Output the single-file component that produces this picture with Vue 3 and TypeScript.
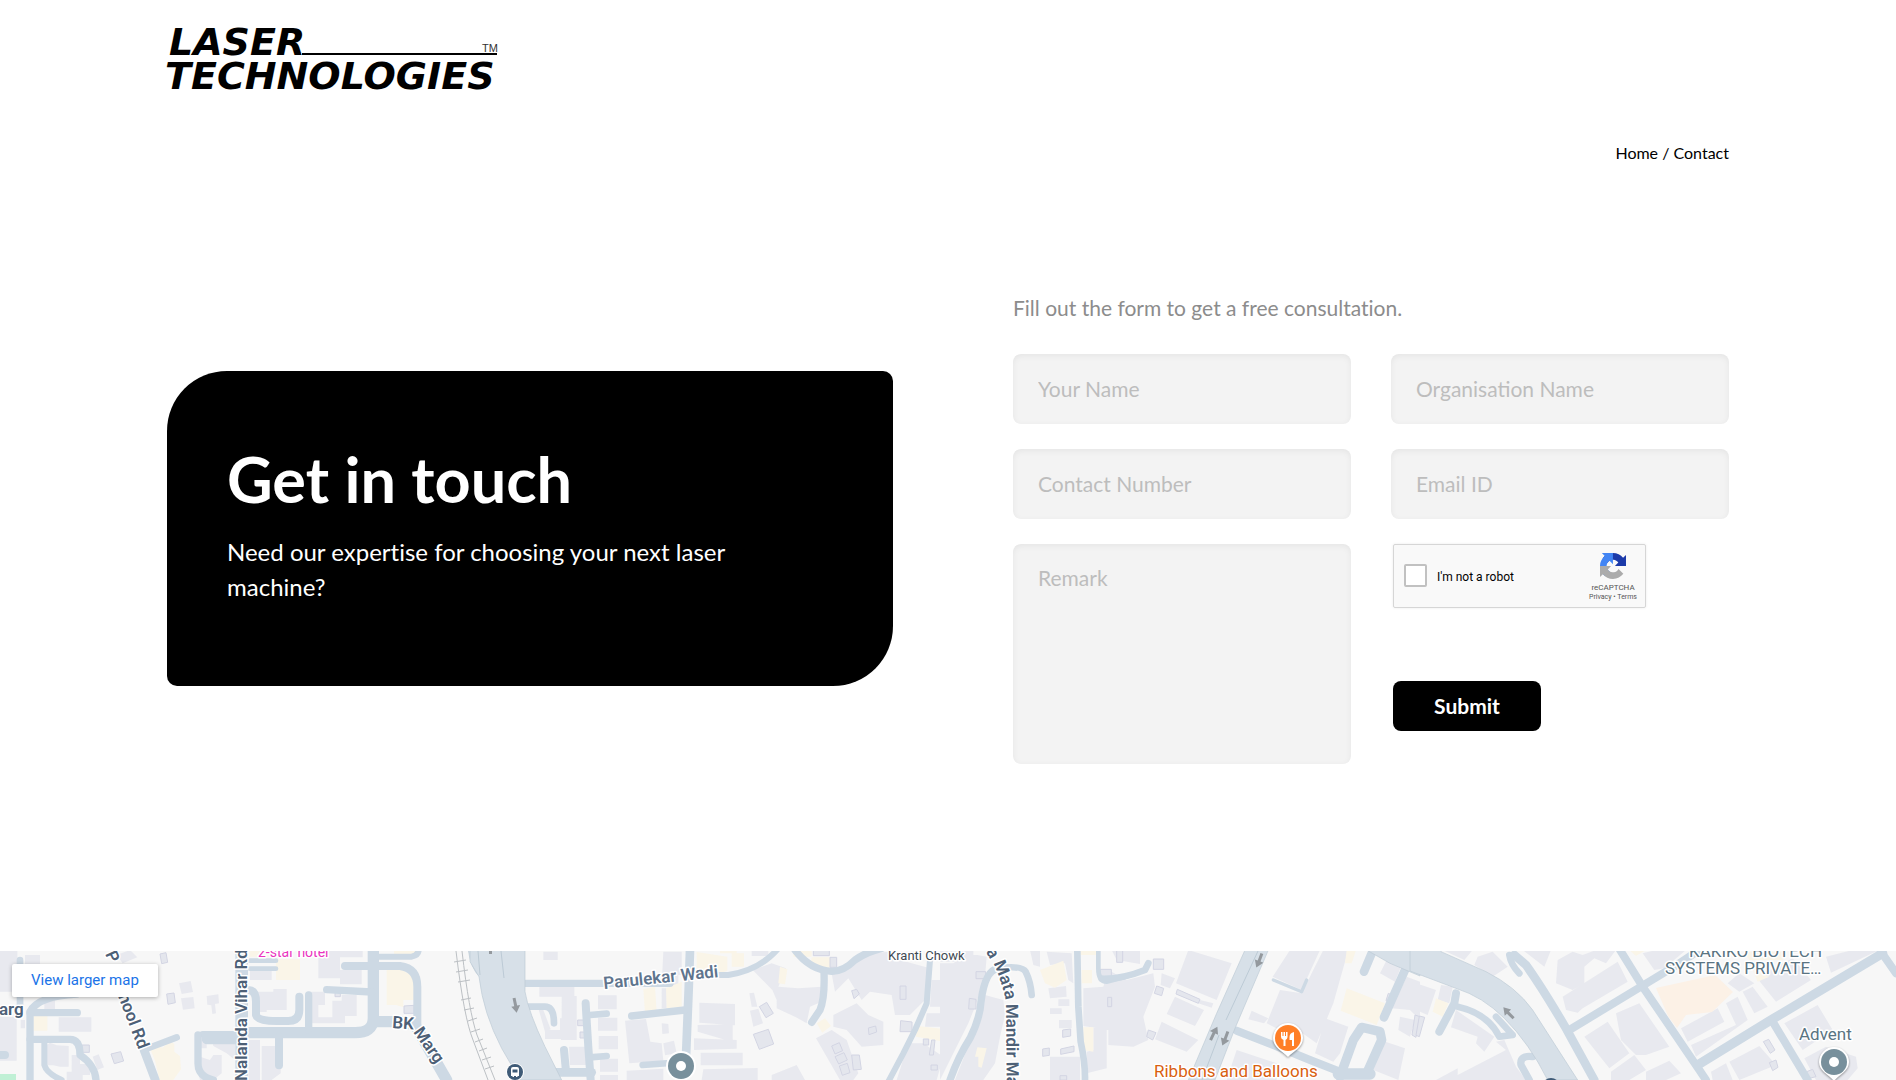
<script setup lang="ts">
import { reactive } from 'vue'

interface Road {
  d: string
  w: number
}

interface Tile {
  x: number
  buildings: string
  outlined: string
  cream: string
  highways: string
  roads: Road[]
}

const form = reactive({
  name: '',
  organisation: '',
  phone: '',
  email: '',
  remark: '',
  human: false,
})

const fields = [
  { key: 'name', label: 'Your Name', type: 'text' },
  { key: 'organisation', label: 'Organisation Name', type: 'text' },
  { key: 'phone', label: 'Contact Number', type: 'tel' },
  { key: 'email', label: 'Email ID', type: 'email' },
] as const

// Map artwork, stored per tile in thirds of a pixel.
const tiles: Tile[] = [
  {
    x: 0,
    buildings:
      'M0 30H52V155H0Z M75 45H120V72H75Z M350 45L390 30L412 52L368 70Z M133 180H165V210H133Z M176 232H274V275H176Z M0 230H50V362H0Z M62 240H75V265H62Z M135 318L150 308L170 316L206 318V380H180L160 376L132 376Z M215 345H240V372H270V405H248V420H200V395H215Z M278 350L296 343L312 382L292 390Z M537 130L572 123L579 156L545 162Z M543 175L580 171L584 205L549 209Z M620 168L655 163L657 190L645 192L648 220L637 222L634 196L622 194Z M586 283H620V325H586Z M635 290H705V360L680 340L640 318Z M600 350L630 360L640 345H665V400L640 420H600L592 385Z M745 300H780V420H745Z M785 318H825V355H842V400L815 420H785Z M750 85H815V120H750Z M760 155H820V147H860V210H800V216L760 216Z M955 50H1020V90H1085V133H1020V115H955Z M920 155H975V195H955V232H997V182H1025V165H1070V228H1035V250H920Z M965 30H1088V52H965Z',
    outlined:
      'M480 42L498 38L503 67L485 71Z M500 162L522 159L526 188L504 193Z M333 342L362 335L371 363L343 371Z M1005 148H1021V170H1005Z M1212 198L1242 196V220L1212 220Z M246 315H268V337H246Z',
    cream:
      'M100 228H142V272H100Z M450 325L480 315L486 325L510 304L523 312V335L540 348L543 388L520 420H478L466 365Z M828 58H900V120H828Z M748 30H820V50H748Z M1160 88L1195 76H1215V95L1243 108V180H1210V202L1188 195H1160Z M1182 30H1250V46H1225V58H1190V46H1182Z',
    highways: 'M1405 30H1440V112Q1412 85 1405 30Z',
    roads: [
      { d: 'M90 420V215Q115 168 230 162', w: 22 },
      { d: 'M90 218H232', w: 22 },
      { d: 'M60 60V200', w: 20 },
      { d: 'M90 298H210Q240 298 240 345Q285 375 288 420', w: 22 },
      { d: 'M133 300V375Q140 400 185 420', w: 18 },
      { d: 'M0 345H15', w: 24 },
      { d: 'M432 330L466 420', w: 26 },
      { d: 'M430 330L530 292', w: 20 },
      { d: 'M725 30V420', w: 38 },
      { d: 'M608 283H710', w: 20 },
      { d: 'M622 296H715', w: 34 },
      { d: 'M594 285V370Q594 410 640 420', w: 22 },
      { d: 'M740 278H1060Q1120 280 1120 235V30', w: 34 },
      { d: 'M837 290V376', w: 24 },
      { d: 'M926 165V270', w: 22 },
      { d: 'M745 150Q768 150 768 185V225Q772 243 830 243H865Q898 243 898 210V170', w: 24 },
      { d: 'M980 149L1115 156', w: 22 },
      { d: 'M1035 78H1200Q1252 85 1252 140V260', w: 24 },
      { d: 'M1130 245H1200L1245 255L1340 420', w: 34 },
      { d: 'M1135 50H1235Q1258 45 1256 25', w: 18 },
      { d: 'M750 62H828M750 86H828', w: 14 },
    ],
  },
  {
    x: 470,
    buildings:
      'M220 35H263V60H220Z M208 138H313V168H320V300H273V297H225V270H270V235H275V170H208Z M205 205L220 210L242 268L225 275Z M580 35H635V105H625V135H575Z M384 166H440V208H384Z M384 233H442V272H384Z M386 288H444V328H386Z M390 356H444V395H390Z M465 242L528 237L541 305L575 310L580 362L478 370Z M297 320H350V375H300Z M575 250L595 252L597 280L577 282Z M580 310L612 302L620 340L585 346Z M688 188L795 192V256L688 248Z M683 255L788 253V306L683 275Z M672 295L800 300V326L672 330Z M692 338H818V376H692Z M390 405H444V420H390Z M470 392L580 386V420H470Z M700 388L863 384V420H695Z M838 160L852 158L862 200L845 200Z M840 212L865 206L879 250L850 260Z M848 90L905 70L948 85L925 140L985 145L1055 140V185L1020 200L1010 250L978 232L920 205V180L907 150Z M845 30H895V48H845Z M905 405L980 375L1005 420H905Z M1083 90L1170 60L1200 40L1260 35L1290 60L1380 85L1365 180L1320 225L1275 225L1265 165L1200 155L1175 180L1135 115L1095 155Z M1090 225L1160 190L1195 225L1240 245V315L1175 320L1130 270L1090 260Z M1038 295L1085 270L1130 300L1165 400L1150 420H1110Z M1385 120H1440V200H1380Z M1370 220H1440V260H1365Z M1315 310H1360L1420 350L1400 420H1280Z M575 145H590V205H575Z',
    outlined:
      'M868 200L890 187L910 220L888 233Z M850 283L895 268L911 312L868 328Z M1145 152L1160 148L1168 162L1152 176Z M1085 318L1108 308L1118 332L1095 342Z M1095 350L1122 338L1132 360L1106 372Z M1108 378L1132 370L1140 398L1117 406Z M1145 345L1168 345L1174 388L1150 390Z M1195 264L1217 258L1220 276L1197 284Z M1290 138H1308V178H1290Z M1292 242L1326 246V275H1290Z M1385 300H1395L1390 345H1378Z M1080 52H1100V82H1080Z M1030 30H1078V47H1030Z M323 240H342V257H323Z M330 276H345V294H330Z M1360 297H1376V315H1360Z M1383 375H1402V390H1383Z',
    cream:
      'M520 148L555 140L560 215L525 220Z M588 145L635 125V200L590 205Z M680 36L772 50V92L735 105V92H680Z M785 40H822V80H785Z M930 80L952 88L945 133L925 130Z M1025 52H1080V85H1020Z M1040 250L1065 235L1083 258L1057 278Z M1342 258L1415 266L1413 304L1338 290Z M750 30H800V40H750Z M970 30H1025V50H970Z',
    highways: 'M0 30H165V155Q175 215 225 320L275 420H150L95 325Q40 220 27 110L0 65Z',
    roads: [
      { d: 'M160 130H600', w: 22 },
      { d: 'M660 30L656 150L648 350', w: 26 },
      { d: 'M730 105H775Q870 90 925 25', w: 18 },
      { d: 'M975 30Q1020 90 1085 94Q1120 95 1155 60Q1190 35 1235 25', w: 22 },
      { d: 'M1062 95Q1065 175 1050 210L1025 247', w: 22 },
      { d: 'M1380 60L1370 190L1335 270L1300 340L1255 425', w: 18 },
      { d: 'M485 228L645 210', w: 22 },
      { d: 'M518 375L600 369', w: 20 },
      { d: 'M175 200H225Q252 200 252 250', w: 20 },
      { d: 'M347 190Q353 300 362 420', w: 24 },
      { d: 'M360 225L410 221M360 352L410 348', w: 20 },
      { d: 'M255 397H365', w: 26 },
      { d: 'M282 330L288 395', w: 24 },
    ],
  },
  {
    x: 940,
    buildings:
      'M0 70H40L85 40L140 50L135 110L105 200L85 250L55 310L0 420Z M270 30H300V80L280 75Z M320 35L395 40L400 130L385 120L375 70L330 75Z M135 165L190 180L195 225L180 290L165 370L130 420H45L80 330L120 250Z M325 145L378 138L380 170L330 175Z M355 178H388V198H355Z M330 205H365V222H330Z M357 240H395V265H357Z M430 145L490 140L505 90L560 120L640 100L645 140L610 230L625 300L580 320L505 315V270L430 258Z M460 260L500 262V385L440 400V335L460 330Z M330 350H420V420H330Z M745 30L875 70L830 180L708 130Z M705 170L792 210L765 258L680 222Z M665 245L775 300L740 335L645 298Z M515 30H600V72L530 60Z M665 100L705 115L690 145L662 135Z M780 180L820 190L815 203L775 190Z M1050 30L1140 30L1085 150L998 110Z M1150 30H1225L1180 190L1130 310L1060 260L1015 268L980 250L1020 150L1085 160Z M935 212L985 235L972 250L925 238Z M1155 235L1225 260L1200 340L1180 365L1125 340L1140 290Z M1320 300L1395 325L1375 420L1300 390Z M1345 50L1385 75L1365 125L1320 100Z M1400 110L1440 125V240L1410 210L1355 205Z M1380 230L1425 240L1410 290L1375 270Z M890 330L1010 370V420H860Z M0 30H100V65H0Z',
    outlined:
      'M108 95H137V116H108Z M88 175L108 178V207H86Z M368 270L392 267V288L368 292Z M362 327L402 318V335L362 343Z M308 327L328 324V346L308 349Z M360 407H380V420H360Z M480 88H514V116H480Z M640 57H671V88H640Z M530 30H548V67H530Z M503 172H515V200H503Z M650 138L671 145L665 167L643 160Z M712 148L780 178L775 190L708 162Z M625 270L648 278L638 300L620 290Z M1345 160L1355 165L1348 188L1338 182Z M1425 225L1440 230L1428 292L1416 285Z',
    cream:
      'M300 90L370 62L380 120L345 143L315 130Z M420 30H468V45H420Z M425 90H456V130H425Z M430 262H460V335L430 330Z M112 322L140 325L125 383L115 380V350H105Z M1220 30H1248L1235 70H1215Z M1220 145L1335 190L1310 255L1202 212Z',
    highways:
      'M915 30H985L885 265L825 420H745L830 220Z M1280 30H1440V108L1350 70Z',
    roads: [
      { d: 'M30 420Q55 350 90 295Q120 235 123 185Q135 90 175 85', w: 22 },
      { d: 'M175 85Q245 75 257 95Q272 125 275 165', w: 20 },
      { d: 'M412 30L415 200L422 305Q436 370 435 420', w: 20 },
      { d: 'M475 30V85Q475 125 500 125Q545 115 590 100', w: 14 },
      { d: 'M485 116Q545 118 615 90L625 70', w: 20 },
      { d: 'M890 272L1000 315L1110 360L1200 395', w: 24 },
      { d: 'M1200 410L1240 300L1265 262L1320 275L1325 300L1280 400', w: 28 },
      { d: 'M1195 402H1290', w: 34 },
      { d: 'M1272 95L1295 40', w: 26 },
      { d: 'M1332 232L1395 90', w: 26 },
      { d: 'M1000 120L1085 155L1100 120', w: 10 },
    ],
  },
  {
    x: 1416,
    buildings:
      'M0 130L60 150L35 225L0 210Z M75 135L110 140L100 190L65 180Z M120 210L235 290L205 335L180 310L185 290L105 262Z M80 30H170L145 60Z M185 50L230 35L275 80L230 110L175 75Z M320 30H405L385 80Z M425 60L470 35L500 45L540 30H600L570 70L535 55L505 80V130L470 150L420 130Z M440 170L605 65L635 125L500 205L485 218L450 210Z M240 305L265 300L300 380L330 420H60L125 385V405L270 330Z M505 290L575 245L640 340L580 385Z M600 220L670 190L760 320L690 345L660 345L615 300Z M585 395L655 345L690 390L640 420H585Z M690 395L760 362L795 400L750 420H690Z M680 40L720 30H810L745 85L715 90Z M795 265L905 205L925 245L815 305Z M825 315L960 255L930 190L965 170L995 240L840 350Z M980 155L1010 140L1055 200L1015 220Z M1020 110L1130 55L1185 120L1080 185Z M1230 50L1310 30H1390L1245 98Z M935 130L970 100L1015 130L970 155Z M1105 250L1205 195L1250 270L1160 330Z M940 365L1030 318L1080 375L970 420Z M1165 355L1230 320L1320 350L1325 385L1295 420H1200Z M885 395L930 370L950 420H890Z',
    outlined:
      'M1042 305L1058 298L1077 330L1063 340Z M1060 368L1080 360L1086 382L1070 392Z M10 228L26 232L10 290L0 286Z M1172 395L1190 388L1200 410L1180 415Z',
    cream:
      'M60 175L97 190L80 230L50 215Z M640 30H690L660 48Z M985 35H1100V60H1000Z M1010 90L1060 110L1025 125Z',
    highways:
      'M75 35L210 95Q300 140 350 210L485 420H395Q340 310 265 235Q200 170 120 145L-18 93V20H75Z',
    roads: [
      { d: 'M280 45Q285 75 310 100', w: 20 },
      { d: 'M295 45L330 75Q380 145 450 265L535 420', w: 26 },
      { d: 'M612 30L680 140L850 390L870 420', w: 24 },
      { d: 'M460 270L675 140L790 70L850 30', w: 24 },
      { d: 'M845 375L1065 240L1400 40', w: 28 },
      { d: 'M1070 245L1175 420', w: 24 },
      { d: 'M1395 35L1440 100', w: 24 },
      { d: 'M120 160L115 190L70 275', w: 24 },
      { d: 'M125 200Q215 220 250 290L290 285L240 230', w: 20 },
      { d: 'M350 350Q310 345 315 375L340 420', w: 22 },
    ],
  },
]
</script>

<template>
  <div class="page">
    <header class="container header">
      <a class="logo" href="#" aria-label="Laser Technologies">
        <svg width="336" height="64" viewBox="0 0 336 64">
          <text class="logo-word" x="2" y="27">LASER</text>
          <text class="logo-word" x="-2" y="61">TECHNOLOGIES</text>
          <path d="M135 26H330" stroke="#000" stroke-width="2" />
          <text class="logo-tm" x="315" y="24">TM</text>
        </svg>
      </a>
      <nav class="breadcrumb" aria-label="Breadcrumb">
        <a href="#">Home</a> / <a href="#">Contact</a>
      </nav>
    </header>

    <main class="container contact">
      <section class="intro">
        <h1>Get in touch</h1>
        <p>Need our expertise for choosing your next laser machine?</p>
      </section>

      <form class="form" @submit.prevent>
        <p class="lead">Fill out the form to get a free consultation.</p>
        <div class="grid">
          <input
            v-for="field in fields"
            :key="field.key"
            v-model="form[field.key]"
            class="field"
            :type="field.type"
            :placeholder="field.label"
            :aria-label="field.label"
          />
          <textarea v-model="form.remark" class="field remark" placeholder="Remark" aria-label="Remark"></textarea>
          <div class="actions">
            <div class="captcha">
              <input id="human" v-model="form.human" type="checkbox" />
              <label for="human">I'm not a robot</label>
              <div class="captcha-brand">
                <svg width="26" height="26" viewBox="0 0 64 64">
                  <path fill="#1c3aa9" d="M64 31.955l-.033-1.37V4.687l-7.16 7.16C50.948 4.674 42.033.093 32.05.093c-10.4 0-19.622 4.96-25.458 12.64l11.736 11.86a15.55 15.55 0 0 1 4.754-5.334c2.05-1.6 4.952-2.906 8.968-2.906.485 0 .86.057 1.135.163 4.976.393 9.288 3.14 11.828 7.124l-8.307 8.307L64 31.953" />
                  <path fill="#4285f4" d="M31.862.094l-1.37.033H4.594l7.16 7.16C4.58 13.147 0 22.06 0 32.046c0 10.4 4.96 19.622 12.64 25.458L24.5 45.768a15.55 15.55 0 0 1-5.334-4.754c-1.6-2.05-2.906-4.952-2.906-8.968 0-.485.057-.86.163-1.135.393-4.976 3.14-9.288 7.124-11.828l8.307 8.307L31.86.095" />
                  <path fill="#ababab" d="M.001 32.045l.033 1.37v25.898l7.16-7.16c5.86 7.173 14.774 11.754 24.76 11.754 10.4 0 19.622-4.96 25.458-12.64l-11.736-11.86a15.55 15.55 0 0 1-4.754 5.334c-2.05 1.6-4.952 2.906-8.968 2.906-.485 0-.86-.057-1.135-.163-4.976-.393-9.288-3.14-11.828-7.124l8.307-8.307c-10.522.04-22.4.066-27.295-.005" />
                </svg>
                <span class="captcha-name">reCAPTCHA</span>
                <span class="captcha-links"><a href="#">Privacy</a> • <a href="#">Terms</a></span>
              </div>
            </div>
            <button class="submit" type="submit">Submit</button>
          </div>
        </div>
      </form>
    </main>

    <section class="map" aria-label="Map">
      <svg class="map-canvas" viewBox="0 951 1896 129" preserveAspectRatio="xMidYMin slice">
        <rect y="951" width="1896" height="129" fill="#f7f7f7" />
        <g v-for="tile in tiles" :key="tile.x" :transform="`translate(${tile.x} 940) scale(0.33333)`">
          <path :d="tile.buildings" fill="#e8e9ef" />
          <path :d="tile.cream" fill="#faf5e8" />
          <path :d="tile.outlined" fill="#e4e6ed" stroke="#d3d5e3" stroke-width="3" />
          <g fill="none" stroke="#cdd9e4" stroke-linecap="round" stroke-linejoin="round">
            <path v-for="road in tile.roads" :key="road.d" :d="road.d" :stroke-width="road.w" />
          </g>
          <path :d="tile.highways" fill="#d7e0e8" stroke="#bccad5" stroke-width="2" />
        </g>
        <path d="M0 1074H16V1080H0Z" fill="#c0f0d5" />
        <path d="M1656 988L1715 975L1733 992L1712 1012L1686 1015L1677 1028L1668 1016Z" fill="#fcf1e6" />
        <g fill="none" stroke="#bcc0c4">
          <path d="M456 951Q464 1018 473 1040L488 1080M462 951Q469 1012 477 1035L495 1080" />
          <path d="M454 962L466 960M456 972L468 970M458 982L470 980M461 1000L471 998M464 1010L474 1008M468 1021L477 1018M471 1032L480 1029M475 1042L483 1039M479 1051L487 1048M482 1060L491 1057M485 1069L494 1066" />
          <path d="M478 951L480 975M501 951L504 978" stroke="#bccad5" />
        </g>
        <path d="M1258 951L1226 1020M1219 1035L1202 1080" fill="none" stroke="#bccad5" />
        <g fill="#94999e">
          <path d="M-1-7H2V1H5L0 8L-4 1H-1Z" transform="translate(515 1005) rotate(-12)" />
          <path d="M-1-7H2V1H5L0 8L-4 1H-1Z" transform="translate(1259 960) rotate(20)" />
          <path d="M-1-7H2V1H5L0 8L-4 1H-1Z" transform="translate(1225 1038) rotate(20)" />
          <path d="M-1-7H2V1H5L0 8L-4 1H-1Z" transform="translate(1214 1034) rotate(205)" />
          <path d="M-1-7H2V1H5L0 8L-4 1H-1Z" transform="translate(1509 1013) rotate(135)" />
          <path d="M489 951H492V954H489Z" />
        </g>

        <g class="street">
          <text transform="translate(105 954) rotate(65)">P</text>
          <text transform="translate(111 978) rotate(69)">School Rd</text>
          <text x="-16" y="1015">Marg</text>
          <text transform="translate(247 1081) rotate(-90)">Nalanda Vihar Rd</text>
          <text transform="translate(392 1028) rotate(4)">BK</text>
          <text transform="translate(413 1032) rotate(55)">Marg</text>
          <text class="soft" transform="translate(604 989) rotate(-6)">Parulekar Wadi</text>
          <path id="mata-road" d="M980 942L995 967Q1004 988 1006 1003L1007 1120" fill="none" stroke="none" />
          <text><textPath href="#mata-road" startOffset="3">ya Mata Mandir Marg</textPath></text>
        </g>
        <g class="place">
          <text class="hotel" x="258" y="957">2-star hotel</text>
          <text class="chowk" x="888" y="960">Kranti Chowk</text>
          <text class="food" x="1154" y="1077">Ribbons and Balloons</text>
          <text x="1689" y="957">KAKIKO BIOTECH</text>
          <text x="1665" y="974">SYSTEMS PRIVATE…</text>
          <text x="1799" y="1040">Advent</text>
        </g>

        <g fill="#fff">
          <circle cx="681" cy="1066" r="15" />
          <circle cx="681" cy="1066" r="13" fill="#78909c" />
          <circle cx="681" cy="1066" r="5" />
          <path class="pin" d="M1819 1062A15 15 0 0 1 1849 1062C1849 1071 1840 1074 1834 1081C1828 1074 1819 1071 1819 1062Z" />
          <circle cx="1834" cy="1062" r="13" fill="#78909c" />
          <circle cx="1834" cy="1062" r="5" />
          <path class="pin" d="M1273 1038A15 15 0 0 1 1303 1038C1303 1047 1294 1051 1288 1057C1282 1051 1273 1047 1273 1038Z" />
          <circle cx="1288" cy="1038" r="13" fill="#ff7f27" />
          <path d="M1281 1032h1.500v4h1v-4h1.500v4h1v-4h1.500v5q0 2-2 3v6h-2v-6q-2.500-1-2.500-3ZM1294 1032v14h-2v-6h-2.500v-3q0-4 4.500-5Z" />
          <circle cx="515" cy="1072" r="9" />
          <circle cx="515" cy="1072" r="8" fill="#3f5b77" />
          <path d="M511 1069q0-2 2-2h4q2 0 2 2v7h-1.500v1h-1.500v-1h-2v1h-1.500v-1h-1.500Z" />
          <path d="M512.500 1069.500h5v3h-5Z" fill="#3f5b77" />
          <circle cx="1551" cy="1087" r="9" fill="#3f5b77" />
        </g>
      </svg>
      <a class="larger" href="#">View larger map</a>
    </section>
  </div>
</template>

<style>
body {
  margin: 0;
  background: #fff;
}
</style>

<style scoped>
.page {
  display: flex;
  flex-direction: column;
  min-height: 100vh;
  font-family: Lato, 'Open Sans', sans-serif;
  font-variant-ligatures: none;
  color: #000;
}

.page * {
  box-sizing: border-box;
}

a {
  color: inherit;
  text-decoration: none;
}

.container {
  width: 100%;
  max-width: 1610px;
  margin: 0 auto;
  padding: 0 24px;
  box-sizing: border-box;
}

.header {
  display: flex;
  flex-direction: column;
  padding-top: 28px;
}

.logo {
  display: block;
  height: 64px;
  align-self: flex-start;
}

.logo svg {
  display: block;
  overflow: visible;
}

.logo-word {
  font: italic bold 38px 'DejaVu Sans', sans-serif;
}

.logo-tm {
  font: 11px 'Liberation Sans', sans-serif;
  fill: #333;
}

.breadcrumb {
  align-self: flex-end;
  margin-top: 49px;
  font-size: 16px;
  line-height: 24px;
}

.contact {
  display: grid;
  grid-template-columns: minmax(0, 1fr) minmax(0, 716px);
  column-gap: 120px;
  align-items: center;
  padding-top: 128px;
  padding-bottom: 187px;
}

.intro {
  padding: 72px 60px 82px;
  border-radius: 60px 10px;
  background: #000;
  color: #fff;
}

.intro h1 {
  margin: 0 0 19px;
  font-size: 63px;
  line-height: 72px;
  font-weight: 700;
}

.intro p {
  max-width: 520px;
  margin: 0;
  font-size: 24px;
  line-height: 35px;
}

.lead {
  margin: 0 0 31px;
  font-size: 21px;
  line-height: 30px;
  color: #8c8c8c;
}

.grid {
  display: grid;
  grid-template-columns: 1fr 1fr;
  gap: 25px 40px;
}

.field {
  display: block;
  width: 100%;
  height: 70px;
  padding: 0 25px 2px;
  border: 0;
  border-radius: 8px;
  outline: none;
  background: #f3f3f3;
  box-shadow: inset 0 2px 6px rgba(0, 0, 0, 0.06);
  font-family: inherit;
  font-size: 21px;
  color: #333;
}

.field::placeholder {
  color: #bdbdbd;
  opacity: 1;
}

.remark {
  height: 220px;
  padding: 19px 25px;
  line-height: 30px;
  resize: none;
}

.actions {
  display: flex;
  flex-direction: column;
  align-items: flex-start;
  padding-left: 2px;
}

.captcha {
  display: flex;
  align-items: center;
  width: 253px;
  height: 64px;
  padding: 2px 8px 0 10px;
  border: 1px solid #d6d6d6;
  border-radius: 2px;
  background: #f9f9f9;
  box-shadow: 0 0 3px rgba(0, 0, 0, 0.08);
  font-family: Roboto, sans-serif;
}

.captcha input {
  appearance: none;
  width: 23px;
  height: 23px;
  margin: 0 10px 4px 0;
  border: 2px solid #c1c1c1;
  border-radius: 2px;
  background: #fff;
}

.captcha label {
  flex: 1;
  font-size: 12px;
}

.captcha-brand {
  display: flex;
  flex-direction: column;
  align-items: center;
  color: #555;
}

.captcha-name {
  margin-top: 3px;
  font-size: 8px;
  line-height: 11px;
}

.captcha-links {
  font-size: 7px;
  line-height: 9px;
}

.submit {
  width: 148px;
  height: 50px;
  margin-top: 73px;
  padding: 0 0 2px;
  border: 0;
  border-radius: 8px;
  background: #000;
  color: #fff;
  font-family: inherit;
  font-size: 21px;
  font-weight: 700;
}

.map {
  position: relative;
  flex: 1;
  min-height: 129px;
  overflow: hidden;
}

.map-canvas {
  position: absolute;
  inset: 0;
  width: 100%;
  height: 100%;
}

.map text {
  font-family: Roboto, sans-serif;
  stroke: #fff;
  stroke-width: 3px;
  stroke-linejoin: round;
  paint-order: stroke;
}

.street text {
  font-size: 17px;
  font-weight: 600;
  fill: #4d6076;
}

.street .soft {
  fill: #5f758e;
}

.place text {
  font-size: 17px;
  fill: #5a7482;
}

.place .hotel {
  font-size: 14px;
  fill: #ea35c0;
}

.place .chowk {
  font-size: 13px;
  fill: #3f4a54;
}

.place .food {
  fill: #d9600f;
}

.pin {
  filter: drop-shadow(0 1px 1px rgba(0, 0, 0, 0.4));
}

.larger {
  position: absolute;
  top: 13px;
  left: 12px;
  padding: 0 19px;
  border-radius: 2px;
  background: #fff;
  box-shadow: 0 1px 4px rgba(0, 0, 0, 0.3);
  font: 15px/33px Roboto, sans-serif;
  color: #1a73e8;
}
</style>
